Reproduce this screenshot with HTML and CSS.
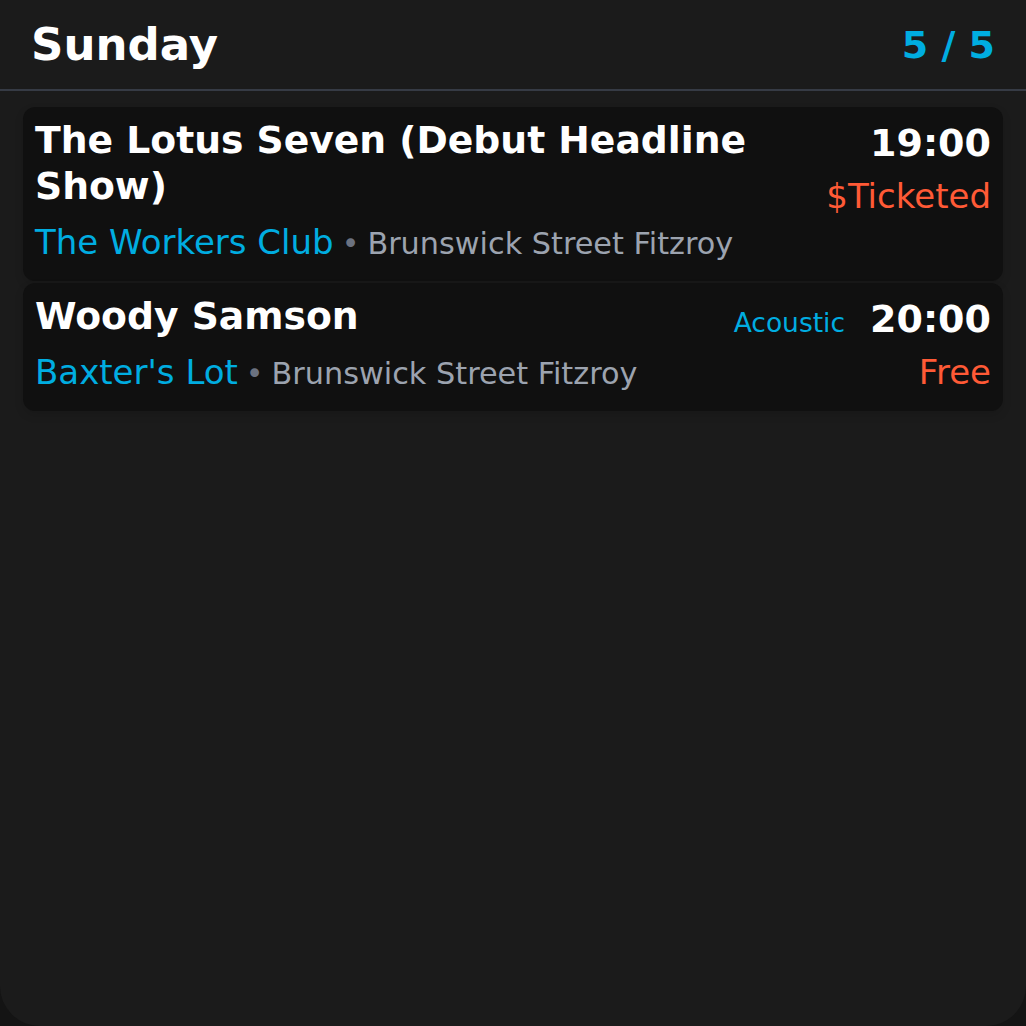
FILE: index.html
```html
<!DOCTYPE html>
<html>
<head>
<meta charset="utf-8">
<link rel="stylesheet" href="styles.css">
</head>
<body>
<div class="widget">
  <header class="head">
    <h1 class="day">Sunday</h1>
    <div class="count">5 / 5</div>
  </header>
  <div class="list">
    <div class="card">
      <div class="main">
        <div class="title">The Lotus Seven (Debut Headline Show)</div>
        <div class="where"><span class="venue">The Workers Club</span><span class="dot">•</span><span class="addr">Brunswick Street Fitzroy</span></div>
      </div>
      <div class="side">
        <div class="top"><span class="time">19:00</span></div>
        <div class="price">$Ticketed</div>
      </div>
    </div>
    <div class="card">
      <div class="main">
        <div class="title">Woody Samson</div>
        <div class="where"><span class="venue">Baxter's Lot</span><span class="dot">•</span><span class="addr">Brunswick Street Fitzroy</span></div>
      </div>
      <div class="side">
        <div class="top"><span class="genre">Acoustic</span><span class="time">20:00</span></div>
        <div class="price">Free</div>
      </div>
    </div>
  </div>
</div>
</body>
</html>
```
FILE: styles.css
```css
html, body {
  margin: 0;
  padding: 0;
  background: #141414;
}
body {
  font-family: "DejaVu Sans", sans-serif;
  color: #fff;
}
.widget {
  height: 1026px;
  background: #1b1b1b;
  border-radius: 0 0 40px 40px;
  overflow: hidden;
}
.head {
  height: 89px;
  display: flex;
  align-items: center;
  justify-content: space-between;
  padding: 0 31px 0 31px;
  border-bottom: 2px solid #363b45;
}
.day {
  margin: 0;
  font-size: 45px;
  font-weight: bold;
  line-height: 1;
}
.count {
  font-size: 38px;
  font-weight: bold;
  color: #00ade1;
}
.list {
  padding: 16px 23px;
  display: flex;
  flex-direction: column;
  gap: 2px;
}
.card {
  background: #101010;
  border-radius: 12px;
  padding: 10px 12px 17px 12px;
  display: flex;
  justify-content: space-between;
  gap: 24px;
  box-shadow: 0 4px 10px rgba(0,0,0,0.12);
}
.main {
  flex: 1;
  min-width: 0;
  max-width: 740px;
}
.title {
  font-size: 37.7px;
  font-weight: bold;
  line-height: 46px;
}
.where {
  margin-top: 13px;
  font-size: 34px;
  line-height: 40px;
  white-space: nowrap;
}
.venue {
  color: #00ade1;
}
.dot {
  font-size: 30px;
  color: #6b7280;
  margin: 0 8px;
}
.addr {
  font-size: 30.3px;
  color: #9ca3af;
}
.side {
  display: flex;
  flex-direction: column;
  align-items: flex-end;
  padding-top: 3px;
}
.top {
  display: flex;
  align-items: baseline;
  gap: 25px;
  line-height: 46px;
}
.time {
  font-size: 38px;
  font-weight: bold;
}
.genre {
  font-size: 26.5px;
  line-height: 30px;
  color: #00ade1;
}
.price {
  font-size: 34px;
  color: #ff5a36;
  line-height: 40px;
  margin-top: 10px;
}
```
